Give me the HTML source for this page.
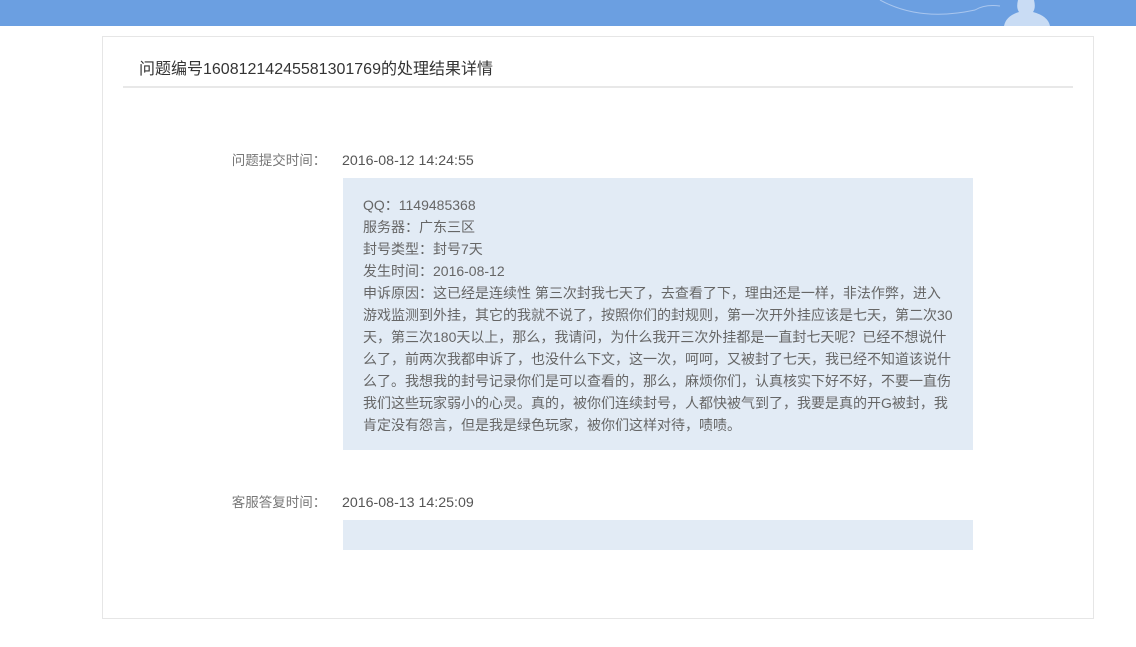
<!DOCTYPE html>
<html><head><meta charset="utf-8"><style>
body{margin:0;width:1136px;height:647px;background:#fff;font-family:"Liberation Sans","Noto Sans CJK SC",sans-serif;color:#555;position:relative;overflow:hidden}
.top{position:absolute;left:0;top:0;width:1136px;height:26px;background:#6b9fe1;overflow:hidden}
.box{position:absolute;left:102px;top:36px;width:990px;height:581px;border:1px solid #e6e6e6}
.title{position:absolute;left:139px;top:60px;font-size:16px;color:#333;line-height:20px}
.hr{position:absolute;left:123px;top:86px;width:950px;height:2px;background:#e8e8e8}
.lab{position:absolute;width:120px;left:210px;text-align:right;font-size:13.5px;color:#777;line-height:18px}
.val{position:absolute;left:342px;font-size:14.2px;color:#555;line-height:18px}
.c{position:absolute;left:343px;width:630px;background:#e2ebf5}
.t{position:absolute;left:363px;top:194px;font-size:14px;line-height:22px;color:#666;white-space:nowrap}
</style></head><body>
<div class="top"><svg width="1136" height="26" style="position:absolute;left:0;top:0">
<path d="M880 0 Q920 22 975 10 Q985 4 1000 6" stroke="#a9c6ee" fill="none" stroke-width="1"/>
<path d="M1018 0 L1034 0 Q1036 8 1033 12 Q1048 16 1050 26 L1004 26 Q1006 16 1019 12 Q1016 8 1018 0Z" fill="#c9dcf4"/>
</svg></div>
<div class="box"></div>
<div class="title">问题编号16081214245581301769的处理结果详情</div>
<div class="hr"></div>
<div class="lab" style="top:152px">问题提交时间：&nbsp;</div>
<div class="val" style="top:152px">2016-08-12 14:24:55</div>
<div class="c" style="top:178px;height:272px"></div>
<div class="t">QQ：1149485368<br>服务器：广东三区<br>封号类型：封号7天<br>发生时间：2016-08-12<br>申诉原因：这已经是连续性 第三次封我七天了，去查看了下，理由还是一样，非法作弊，进入<br>游戏监测到外挂，其它的我就不说了，按照你们的封规则，第一次开外挂应该是七天，第二次30<br>天，第三次180天以上，那么，我请问，为什么我开三次外挂都是一直封七天呢？已经不想说什<br>么了，前两次我都申诉了，也没什么下文，这一次，呵呵，又被封了七天，我已经不知道该说什<br>么了。我想我的封号记录你们是可以查看的，那么，麻烦你们，认真核实下好不好，不要一直伤<br>我们这些玩家弱小的心灵。真的，被你们连续封号，人都快被气到了，我要是真的开G被封，我<br>肯定没有怨言，但是我是绿色玩家，被你们这样对待，啧啧。</div>
<div class="lab" style="top:494px">客服答复时间：&nbsp;</div>
<div class="val" style="top:494px">2016-08-13 14:25:09</div>
<div class="c" style="top:520px;height:30px"></div>
</body></html>
